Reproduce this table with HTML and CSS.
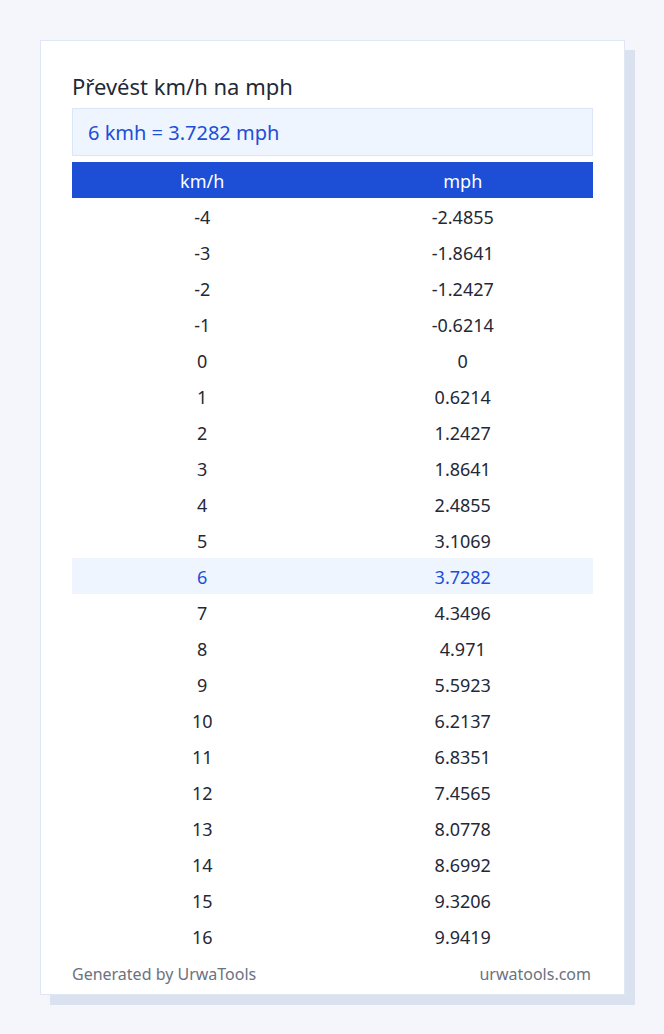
FILE: index.html
```html
<html lang="cs">
  <head>
    <meta charset="UTF-8" />
    <meta name="viewport" content="width=device-width, initial-scale=1.0" />
    <title>Převést km/h na mph</title>
    <link rel="stylesheet" href="styles.css">
  </head>

  <body>
    <div class="card">
      <h1 class="title">Převést km/h na mph</h1>
      <div class="result">6 kmh = 3.7282 mph</div>
      <table class="convert">
        <thead>
          <tr><th>km/h</th><th>mph</th></tr>
        </thead>
        <tbody>
          <tr><td>-4</td><td>-2.4855</td></tr>
          <tr><td>-3</td><td>-1.8641</td></tr>
          <tr><td>-2</td><td>-1.2427</td></tr>
          <tr><td>-1</td><td>-0.6214</td></tr>
          <tr><td>0</td><td>0</td></tr>
          <tr><td>1</td><td>0.6214</td></tr>
          <tr><td>2</td><td>1.2427</td></tr>
          <tr><td>3</td><td>1.8641</td></tr>
          <tr><td>4</td><td>2.4855</td></tr>
          <tr><td>5</td><td>3.1069</td></tr>
          <tr class="current"><td>6</td><td>3.7282</td></tr>
          <tr><td>7</td><td>4.3496</td></tr>
          <tr><td>8</td><td>4.971</td></tr>
          <tr><td>9</td><td>5.5923</td></tr>
          <tr><td>10</td><td>6.2137</td></tr>
          <tr><td>11</td><td>6.8351</td></tr>
          <tr><td>12</td><td>7.4565</td></tr>
          <tr><td>13</td><td>8.0778</td></tr>
          <tr><td>14</td><td>8.6992</td></tr>
          <tr><td>15</td><td>9.3206</td></tr>
          <tr><td>16</td><td>9.9419</td></tr>
        </tbody>
      </table>
      <div class="footer">
        <span>Generated by UrwaTools</span>
        <span>urwatools.com</span>
      </div>
    </div>
  </body>
</html>
```

FILE: styles.css
```css
body {
  margin: 0;
  padding: 40px;
  background-color: #f4f6fb;
  font-family: "Noto Sans", "Open Sans", sans-serif;
  color: #1f2937;
}

.card {
  width: 521px;
  padding: 30px 31px 0 31px;
  background-color: #fff;
  border: 1px solid #dfe6f5;
  box-shadow: 10px 10px 0 #dbe2ef;
}

.title {
  margin: 0 0 7px 0;
  font-size: 22px;
  font-weight: 400;
  line-height: 30px;
}

.result {
  height: 46px;
  padding: 0 15px;
  display: flex;
  align-items: center;
  background-color: #eef5fe;
  border: 1px solid #dbe7f7;
  color: #1d4ed8;
  font-size: 20px;
  margin-bottom: 6px;
}

.convert {
  width: 100%;
  border-collapse: collapse;
  table-layout: fixed;
  font-size: 18px;
}

.convert th {
  height: 36px;
  padding: 1px 0 0 0;
  background-color: #1c4fd6;
  color: #fff;
  font-weight: 400;
}

.convert td {
  height: 36px;
  padding: 1px 0 0 0;
  text-align: center;
}

.convert tr.current td {
  background-color: #eef5fe;
  color: #1d4ed8;
}

.footer {
  display: flex;
  justify-content: space-between;
  padding: 10px 2px 10px 0;
  line-height: 20px;
  font-size: 16px;
  color: #6b7280;
}
```
